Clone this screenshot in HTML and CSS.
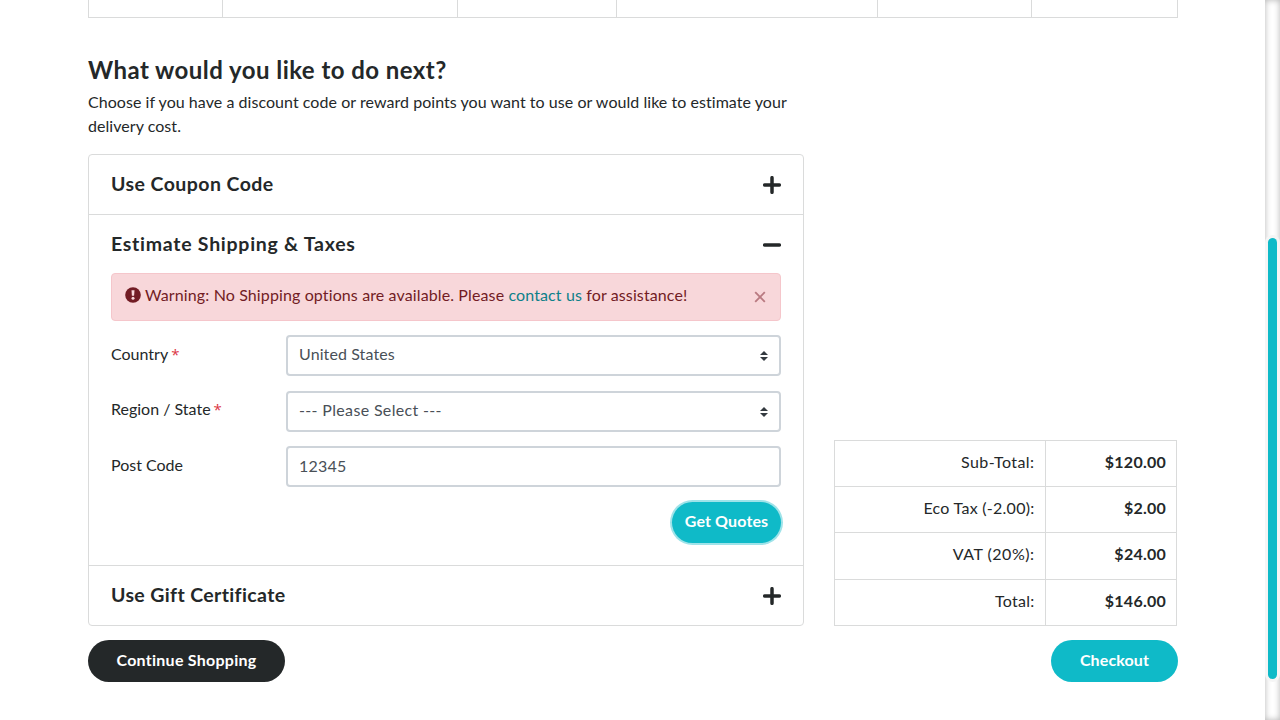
FILE: index.html
```html
<!DOCTYPE html>
<html lang="en">
<head>
<meta charset="utf-8">
<title>Shopping Cart</title>
<link rel="stylesheet" href="styles.css">
</head>
<body>
<main class="page">
  <div class="cart-table"><div></div><div></div><div></div><div></div><div></div><div></div></div>
  <h2 class="title">What would you like to do next?</h2>
  <p class="intro">Choose if you have a discount code or reward points you want to use or would like to estimate your<br>delivery cost.</p>
  <div class="columns">
    <section class="accordion">
      <h3 class="head"><span class="t-coupon">Use Coupon Code</span>
        <svg class="toggle" viewBox="0 0 18 18"><path d="M9 1.7v14.6M1.7 9h14.6"/></svg></h3>
      <div class="panel">
        <h3 class="head"><span class="t-ship">Estimate Shipping &amp; Taxes</span>
          <svg class="toggle" viewBox="0 0 18 18"><path d="M1.7 9h14.6"/></svg></h3>
        <div class="alert">
          <svg class="warn" viewBox="0 0 16 16"><circle cx="8" cy="8" r="7.8"/><path d="M6.5 3.2h3l-.4 5.5H6.9z"/><circle class="dot" cx="8" cy="11.3" r="1.5"/></svg>
          <span class="t-warn">Warning: No Shipping options are available. Please <a>contact us</a> for assistance!</span>
          <svg class="close" viewBox="0 0 12 12"><path d="M1.2 1.2l9.6 9.6M10.8 1.2L1.2 10.8"/></svg>
        </div>
        <div class="field"><label>Country<b>*</b></label>
          <div class="control"><span class="t-us">United States</span><svg class="arrows" viewBox="0 0 8 10"><path d="M4 0L0 4h8zM4 10L0 6h8z"/></svg></div></div>
        <div class="field region"><label>Region / State<b>*</b></label>
          <div class="control"><span class="t-select">--- Please Select ---</span><svg class="arrows" viewBox="0 0 8 10"><path d="M4 0L0 4h8zM4 10L0 6h8z"/></svg></div></div>
        <div class="field post"><label>Post Code</label>
          <div class="control"><span class="t-zip">12345</span></div></div>
        <div class="actions"><button class="btn quotes">Get Quotes</button></div>
      </div>
      <h3 class="head"><span class="t-gift">Use Gift Certificate</span>
        <svg class="toggle" viewBox="0 0 18 18"><path d="M9 1.7v14.6M1.7 9h14.6"/></svg></h3>
    </section>
    <div class="totals">
      <div class="t-sub">Sub-Total:</div><div class="sum">$120.00</div>
      <div class="t-eco">Eco Tax (-2.00):</div><div class="sum">$2.00</div>
      <div class="t-vat">VAT (20%):</div><div class="sum">$24.00</div>
      <div class="t-total">Total:</div><div class="sum">$146.00</div>
    </div>
  </div>
  <div class="buttons">
    <button class="btn dark">Continue Shopping</button>
    <button class="btn checkout">Checkout</button>
  </div>
</main>
<aside class="scroll"><div class="thumb"></div></aside>
</body>
</html>
```
FILE: styles.css
```css
* { box-sizing: border-box; }
body { margin: 0; height: 720px; overflow: hidden; display: flex; background: #fff; color: #242829; font: 16px/24px Lato, "Open Sans", sans-serif; font-variant-ligatures: none; }
h2, h3, p { margin: 0; }
.page { width: 1265px; padding: 0 87px 0 88px; }
.cart-table { display: grid; grid-template-columns: 134px 235px 159px 261px 154px 146px; width: 1090px; height: 18px; border-left: 1px solid #dadbdb; border-bottom: 1px solid #dadbdb; }
.cart-table div { border-right: 1px solid #dadbdb; }
.title { margin-top: 37px; font-size: 24px; line-height: 30px; font-weight: 700; letter-spacing: .45px; }
.intro { margin-top: 5px; letter-spacing: .048px; }
.columns { display: flex; justify-content: space-between; align-items: flex-end; margin-top: 16px; padding-right: 1px; }
.accordion { width: 716px; height: 472px; border: 1px solid #dadbdb; border-radius: 4px; }
.head { display: flex; align-items: center; justify-content: space-between; height: 59px; padding: 0 22px 1px; font-size: 19.5px; font-weight: 700; }
.t-coupon { letter-spacing: .44px; }
.t-ship { letter-spacing: .73px; }
.t-gift { letter-spacing: .37px; }
.toggle { width: 18px; height: 18px; margin-top: 1px; fill: none; stroke: #242829; stroke-width: 3.5; stroke-linecap: round; }
.panel { height: 352px; border-top: 1px solid #dadbdb; border-bottom: 1px solid #dadbdb; }
.alert { display: flex; align-items: center; height: 48px; margin: -1px 22px 14px; padding: 0 14px 4px 13px; color: #721c24; background: #f8d7da; border: 1px solid #f5c6cb; border-radius: 4px; }
.alert a { color: #0d8089; }
.t-warn { letter-spacing: .12px; }
.warn { width: 16px; height: 16px; margin-right: 4px; margin-top: -1px; fill: #721c24; }
.warn path, .warn .dot { fill: #f8d7da; }
.close { width: 12px; height: 12px; margin: 4px 0 0 auto; fill: none; stroke: #b97a81; stroke-width: 1.9; }
.field { display: flex; height: 41px; margin: 0 22px 15px; }
.field.post { margin-top: -1px; }
.field label { width: 175px; padding-top: 7px; }
.field.region label { padding-top: 6px; }
.field b { margin-left: 3px; color: #dc3545; font: 15px/0 "Open Sans", sans-serif; }
.control { flex: 1; display: flex; align-items: center; justify-content: space-between; padding: 0 11px 3px; color: #495057; border: 2px solid #ced4da; border-radius: 4px; }
.region .control { padding-bottom: 4px; }
.post .control { padding-bottom: 1px; }
.t-us { letter-spacing: .1px; }
.t-select { letter-spacing: .34px; }
.t-zip { letter-spacing: .2px; }
.arrows { width: 8px; height: 10px; margin: 4px 0 0; fill: #343a40; }
.actions { display: flex; justify-content: flex-end; padding-right: 22px; }
.btn { padding: 0 0 3px; height: 42px; border: 0; border-radius: 21px; color: #fff; background: #0fbac8; font: 700 16px/24px Lato, "Open Sans", sans-serif; letter-spacing: .13px; }
.quotes { width: 109px; height: 41px; box-shadow: 0 0 0 2px #9fe3e9; }
.totals { display: grid; grid-template-columns: 211px 131px; grid-template-rows: 46px 46px 47px 46px; border-left: 1px solid #dadbdb; border-top: 1px solid #dadbdb; }
.totals div { padding: 9px 10.5px 9px 0; text-align: right; border-right: 1px solid #dadbdb; border-bottom: 1px solid #dadbdb; }
.totals .sum { padding-right: 10px; font-weight: 700; letter-spacing: .24px; }
.t-sub { letter-spacing: .42px; }
.t-eco { letter-spacing: .27px; }
.t-vat { letter-spacing: .5px; }
.t-total { letter-spacing: .25px; }
.buttons { display: flex; justify-content: space-between; margin-top: 14px; }
.dark { width: 197px; background: #242829; letter-spacing: .26px; }
.checkout { width: 127px; }
.scroll { width: 15px; height: 720px; padding: 238px 3px 0; background: #fff; box-shadow: inset 0 0 6px rgba(0,0,0,.3); }
.thumb { width: 9px; height: 441px; border-radius: 5px; background: #0fbac8; box-shadow: 0 0 0 3px #f5f5f5; }
```
